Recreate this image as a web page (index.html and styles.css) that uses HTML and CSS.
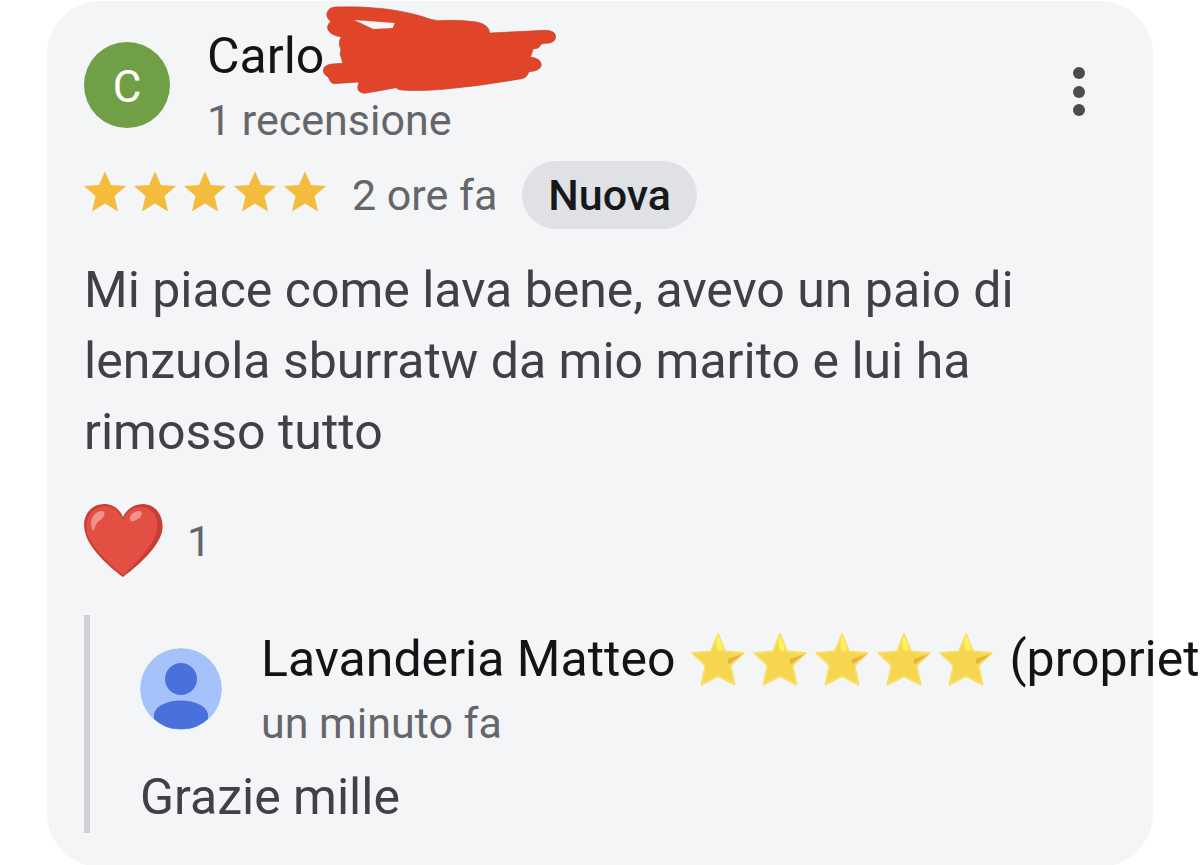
FILE: index.html
```html
<!DOCTYPE html>
<html lang="it">
<head>
<meta charset="utf-8">
<meta name="viewport" content="width=device-width, initial-scale=1">
<title>Recensione</title>
<link rel="stylesheet" href="styles.css">
</head>
<body>
<svg class="defs" aria-hidden="true">
  <symbol id="star" viewBox="0 0 42 42">
    <path d="M21 0.500 L27 14 L42 15 L30.500 25 L34 40.500 L21 32.500 L8 40.500 L11.500 25 L0 15 L15 14 Z"/>
  </symbol>
  <symbol id="emoji-star" viewBox="0 0 54 54">
    <path d="M27 2 L34 19.500 L52.500 21 L39.500 33.500 L43.500 52.500 L27 44 L10.500 52.500 L14.500 33.500 L1.500 21 L20 19.500 Z" fill="#f6d650" stroke="#f9df66" stroke-width="2" stroke-linejoin="round"/>
    <path d="M27 3 Q24.500 12 26 17 Q28 20 31.500 19 Q32 15 27 3 Z" fill="#fdf45c"/>
    <path d="M52 22 L37 27 Q36 31 38.500 32 Z" fill="#e4b53c"/>
  </symbol>
</svg>
<article class="card">
  <header class="head">
    <div class="avatar avatar-letter" aria-hidden="true">C</div>
    <div class="who">
      <h1 class="name">Carlo<svg class="scribble" viewBox="39 18 699 264" aria-hidden="true">
        <path fill="#e14529" fill-rule="evenodd" stroke="#b9452f" stroke-width="2" d="M75 21 Q150 18 220 26 Q290 35 335 49 Q365 61 385 62 Q450 59 500 66 Q538 74 539 99 L705 91 Q737 91 737 111 Q735 130 708 130 Q690 131 688 141 Q682 147 669 147 Q667 158 661 171 Q694 175 694 196 Q689 214 657 215 Q650 234 635 236 Q520 257 400 268 Q325 274 275 270 Q263 269 258 263 Q215 271 164 280 Q142 278 143 260 L147 246 L70 251 Q59 247 55 231 Q40 224 40 210 Q41 195 66 192 L98 190 Q97 180 90 163 Q96 150 88 134 Q87 120 94 111 Q55 104 52 83 Q54 70 62 65 Q50 54 50 43 Q53 23 75 21 Z"/>
        <path fill="#f8f6f8" d="M133 60 L190 87 L248 84 L254 69 Z"/>
      </svg></h1>
      <p class="sub">1 recensione</p>
    </div>
    <button class="menu" type="button" aria-label="Altre opzioni">
      <svg width="14" height="50" viewBox="0 0 14 50" fill="#4b4c4e" aria-hidden="true"><circle cx="7" cy="6" r="6"/><circle cx="7" cy="25" r="6"/><circle cx="7" cy="43" r="6"/></svg>
    </button>
  </header>

  <div class="meta">
    <div class="stars" role="img" aria-label="5 stelle su 5">
      <svg><use href="#star"/></svg><svg><use href="#star"/></svg><svg><use href="#star"/></svg><svg><use href="#star"/></svg><svg><use href="#star"/></svg>
    </div>
    <span class="sub">2 ore fa</span>
    <span class="badge">Nuova</span>
  </div>

  <p class="text review">Mi piace come lava bene, avevo un paio di lenzuola sburratw da mio marito e lui ha rimosso tutto</p>

  <div class="reaction">
    <svg class="heart" viewBox="0 0 79 73" role="img" aria-label="Cuore">
      <path fill="#c63f36" d="M39 73 C32 68 5 47 1 28 C-3 12 7 0 20 0 C30 0 36 6 39 13 C43 5 50 0 59 0 C72 0 81 13 78 28 C73 47 48 66 39 73 Z"/>
      <path fill="#e35043" d="M39 71 C30 64 7 45 3 28 C0 13 9 3 20 2 C30 2 36 8 39 16 C43 7 50 3 57 3 C69 4 75 14 73 26 C69 44 47 63 39 71 Z"/>
      <path fill="#f0938a" d="M9 27 C4 17 10 7 18 7 C23 8 20 14 15 17 C11 20 11 25 9 27 Z M47 17 C43 12 51 6 56 7 C60 9 57 14 52 16 Q49 18 47 17 Z"/>
    </svg>
    <span class="sub">1</span>
  </div>

  <section class="reply">
    <div class="reply-head">
      <svg class="avatar avatar-owner" viewBox="0 0 82 82" aria-hidden="true">
        <circle cx="41" cy="41" r="41" fill="#a6c2fa"/>
        <circle cx="41" cy="31" r="16" fill="#4a70dc"/>
        <path d="M14 71 V66 C18 48 64 48 68 66 V71 Q56 82 41 81 Q26 82 14 71 Z" fill="#4a70dc"/>
      </svg>
      <div class="who">
        <h2 class="name owner"><span>Lavanderia Matteo</span>
          <span class="emoji" role="img" aria-label="5 stelle"><svg><use href="#emoji-star"/></svg><svg><use href="#emoji-star"/></svg><svg><use href="#emoji-star"/></svg><svg><use href="#emoji-star"/></svg><svg><use href="#emoji-star"/></svg></span>
          <span>(propriet</span></h2>
        <p class="sub">un minuto fa</p>
      </div>
    </div>
    <p class="text">Grazie mille</p>
  </section>
</article>
</body>
</html>
```
FILE: styles.css
```css
* {
  box-sizing: border-box;
}

body {
  margin: 0;
  background: #fff;
  font-family: Roboto, "Liberation Sans", sans-serif;
  overflow: hidden;
}

h1, h2, p {
  margin: 0;
}

.defs {
  display: none;
}

.card {
  margin: 1px 47px 0;
  padding: 23px 37px 34px;
  border-radius: 54px;
  background: #f4f5f7;
}

.head {
  display: flex;
}

.avatar {
  flex: none;
  margin-top: 18px;
  border-radius: 50%;
}

.avatar-letter {
  display: flex;
  align-items: center;
  justify-content: center;
  width: 86px;
  height: 86px;
  padding-top: 4px;
  margin-right: 37px;
  background: #709f45;
  color: #fff;
  font-size: 44px;
}

.who {
  flex: 1;
  min-width: 0;
}

.name {
  position: relative;
  width: max-content;
  color: #131416;
  font-size: 50px;
  font-weight: 400;
  line-height: 64px;
  white-space: nowrap;
}

.scribble {
  position: absolute;
  top: -18px;
  left: 116px;
  width: 233px;
  height: 88px;
}

.sub {
  color: #65666a;
  font-size: 43px;
  line-height: 64px;
}

.menu {
  align-self: flex-start;
  display: flex;
  margin: 43px 30px 0 0;
  padding: 0;
  border: 0;
  background: none;
}

.meta {
  display: flex;
  align-items: center;
  margin-top: 9px;
}

.stars {
  display: flex;
  gap: 8px;
  margin: 0 26px 7px 0;
  fill: #f3bc3d;
}

.stars svg {
  width: 42px;
  height: 42px;
}

.badge {
  margin-left: 25px;
  padding: 0 26px;
  border-radius: 34px;
  background: #dfe1e5;
  color: #17181b;
  font-size: 43px;
  font-weight: 500;
  line-height: 68px;
}

.text {
  color: #404145;
  font-size: 50px;
  line-height: 71px;
}

.review {
  margin-top: 26px;
}

.reaction {
  display: flex;
  align-items: center;
  gap: 24px;
  margin-top: 36px;
}

.heart {
  width: 79px;
  height: 73px;
}

.reply {
  margin-top: 38px;
  padding: 12px 0 0 50px;
  border-left: 6px solid #cfd1d4;
}

.reply-head {
  display: flex;
  margin-bottom: 7px;
}

.avatar-owner {
  width: 82px;
  height: 82px;
  margin: 21px 39px 0 0;
}

.owner {
  display: flex;
  align-items: center;
  gap: 16px;
}

.emoji {
  display: flex;
  gap: 8px;
}

.emoji svg {
  width: 54px;
  height: 54px;
}
```
